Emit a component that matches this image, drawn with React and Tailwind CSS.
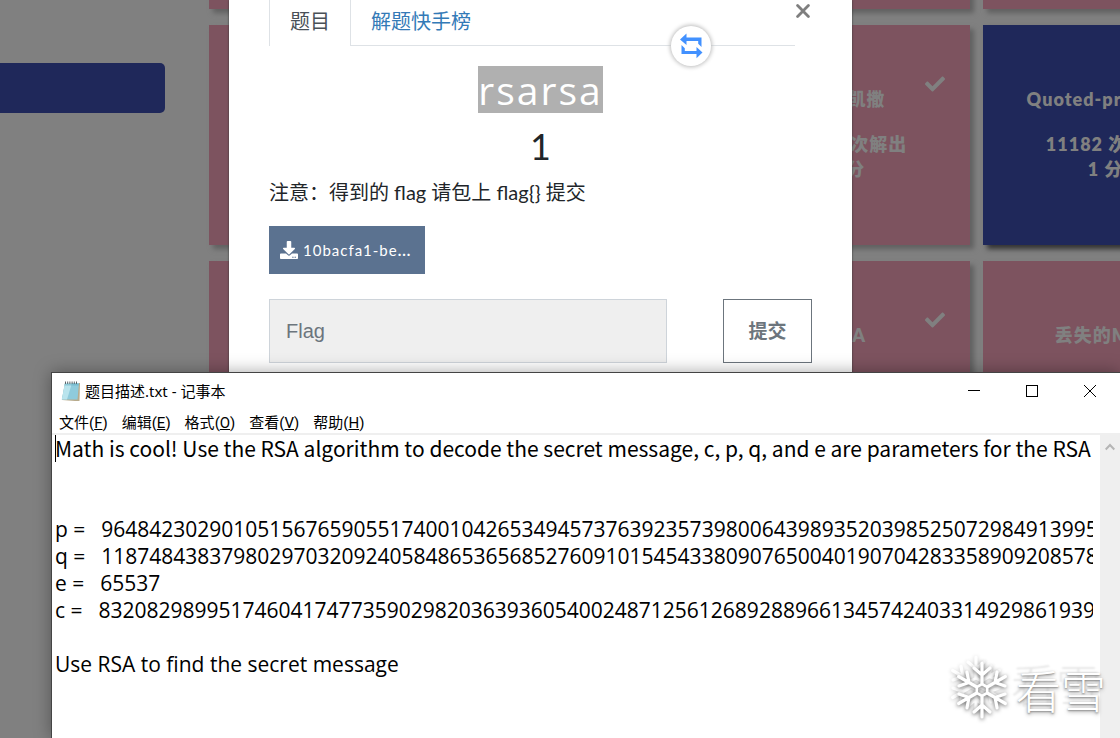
import { FaCheck, FaDownload } from "react-icons/fa";

const MESSAGE = `Math is cool! Use the RSA algorithm to decode the secret message, c, p, q, and e are parameters for the RSA


p =\u2002 9648423029010515676590551740010426534945737639235739800643989352039852507298491399561035009163427050370107570733633350911691280297777160200625281665378483
q =\u2002 11874843837980297032092405848653656852760910154543380907650040190704283358909208578251063047732443992230647903887510065547947313543299303261986053486569407
e =\u2002 65537
c =\u2002 83208298995174604174773590298203639360540024871256126892889661345742403314929861939100492666605647316646576486526217457006376842280869728581726746401583705899941768214138742259689334840735633553053887641847651173776251820293087212885670180367406807406765923638973161375817392737747832762751690104423869019034

Use RSA to find the secret message`;

const CARDS = [
  { id: "a1" }, { id: "a2" }, { id: "a3" }, { id: "a4" },
  { id: "b1" }, { id: "b2" },
  { id: "b3", title: "变异凯撒", solves: "12365 次解出", points: "1 分", solved: true },
  { id: "b4", title: "Quoted-printable", solves: "11182 次解出", points: "1 分", navy: true },
  { id: "c1" }, { id: "c2" },
  { id: "c3", title: "RSA", solved: true },
  { id: "c4", title: "丢失的MD5" },
];

function Card({ title, solves, points, solved, navy }) {
  return (
    <button
      className={
        "relative flex h-[220px] flex-col items-center pt-[62px] text-[18px] font-extrabold leading-[25px] tracking-[1px] text-[#808080] " +
        (navy
          ? "bg-[#1f285a] shadow-[4px_4px_5px_#333]"
          : "bg-[#7d535f] shadow-[4px_4px_5px_#606060]")
      }
    >
      {solved && <FaCheck className="absolute right-[25px] top-[49px] size-5" />}
      {title && <span className="whitespace-nowrap">{title}</span>}
      {solves && <span className="mt-5 whitespace-nowrap">{solves}</span>}
      {points && <span>{points}</span>}
    </button>
  );
}

function Board() {
  return (
    <div className="flex h-screen overflow-hidden">
      <aside className="w-[165px] shrink-0 pt-[63px]">
        <button aria-label="分类" className="block h-[50px] w-full rounded-r-[5px] bg-[#1f285a]" />
      </aside>
      <main className="-mt-[211px] ml-11 grid shrink-0 grid-cols-[repeat(4,245px)] content-start gap-x-[13px] gap-y-4">
        {CARDS.map((c) => (
          <Card key={c.id} {...c} />
        ))}
      </main>
    </div>
  );
}

function Challenge() {
  return (
    <section
      role="dialog"
      aria-label="rsarsa"
      className="relative mx-auto h-full max-w-[623px] bg-white px-10 text-[#212529] shadow-[0_0_2px_#333]"
    >
      <button aria-label="关闭" className="absolute right-[42px] top-1 text-[#7f7f7f]">
        <svg viewBox="0 0 14 14" className="size-[14px]" stroke="currentColor" strokeWidth="2.8" strokeLinecap="round">
          <path d="M1.6 1.6 12.4 12.4M12.4 1.6 1.6 12.4" />
        </svg>
      </button>
      <nav className="mr-[17px] flex h-[46px] text-[20px] leading-[42px]">
        <a href="#challenge" className="w-[82px] border-x border-[#dee2e6] text-center text-[#495057]">题目</a>
        <a href="#solves" className="flex-1 border-b border-[#dee2e6] pl-5 text-[#337ab7]">解题快手榜</a>
      </nav>
      <button
        aria-label="翻译"
        className="absolute left-[442px] top-[26px] flex size-10 items-center justify-center rounded-full bg-white shadow-[0_0_4px_1px_#bbb]"
      >
        <svg viewBox="0 0 24 26" className="h-[26px] w-6" fill="#4291ff">
          <path d="M1 6.5 7.5 0.5V4.5H22.5V14L19.2 10.8V8H7.5V12Z" />
          <path d="M2.5 12 5.8 15.2V18H17.5V14L23.5 19.5 17.5 25.2V21H2.5Z" />
        </svg>
      </button>
      <div className="flex flex-col items-center">
        <h2 className="mt-5 h-[47px] bg-[#b0b0b0] font-['Open_Sans',sans-serif] text-[39px] font-normal leading-[47px] tracking-[2px] text-white">rsarsa</h2>
        <h3 className="mt-3 text-[36px] leading-[42px]">1</h3>
      </div>
      <p className="mt-[10px] text-[20px] leading-[30px]">注意：得到的 flag 请包上 flag{"{}"} 提交</p>
      <button className="mt-[19px] flex h-12 w-[156px] items-center gap-[5px] bg-[#5b7290] pl-[11px] text-[15px] tracking-[1px] text-white">
        <FaDownload className="size-[18px]" />
        <span>10bacfa1-be<b>...</b></span>
      </button>
      <form className="mt-[25px] flex justify-between" onSubmit={(e) => e.preventDefault()}>
        <input
          aria-label="Flag"
          placeholder="Flag"
          className="h-16 w-[398px] border border-[#ced4da] bg-[#efefef] px-4 font-['Liberation_Sans',sans-serif] text-[20px] placeholder:text-[#6c757d]"
        />
        <button className="h-16 w-[89px] border border-[#6c757d] text-[19px] font-bold text-[#6c757d]">提交</button>
      </form>
    </section>
  );
}

function NotepadIcon() {
  return (
    <svg viewBox="0 0 20 21" className="h-[21px] w-5">
      <path d="M4 2H19L18.5 20H14L1 19Z" fill="#b8ab8c" />
      <path d="M4 2H18L16.5 18.5H0.8Z" fill="#8fcbdc" />
      <path d="M4 2H11L6 18.5H0.8Z" fill="#b9e4ed" />
      <path d="M3.7 3.5H17.8L17.7 4.2H3.5Z" fill="#5fa9bf" />
      <path d="M4.5 0.5V3M6.7 0.5V3M8.9 0.5V3M11.1 0.5V3M13.3 0.5V3M15.5 0.5V3" stroke="#5b6469" strokeWidth="1" />
    </svg>
  );
}

const MENUS = [["文件", "F"], ["编辑", "E"], ["格式", "O"], ["查看", "V"], ["帮助", "H"]];

function Notepad() {
  return (
    <section
      aria-label="记事本"
      className="absolute bottom-0 left-[51px] right-0 top-[372px] flex flex-col border-l border-t border-[#444] bg-white font-['Noto_Sans','Noto_Sans_CJK_SC',sans-serif] text-black shadow-[0_0_16px_rgba(0,0,0,0.35)]"
    >
      <header className="flex h-9 items-center pl-[9px] pr-px">
        <NotepadIcon />
        <h1 className="ml-1 flex-1 text-[15px]">题目描述.txt - 记事本</h1>
        <div className="flex">
          <button aria-label="最小化" className="flex h-9 w-[58px] items-center justify-center">
            <svg viewBox="0 0 12 12" className="size-3" stroke="#000" shapeRendering="crispEdges"><path d="M0 5.5H12" /></svg>
          </button>
          <button aria-label="最大化" className="flex h-9 w-[58px] items-center justify-center">
            <svg viewBox="0 0 12 12" className="size-3" stroke="#000" fill="none" shapeRendering="crispEdges"><path d="M.5 .5H11.5V11.5H.5Z" /></svg>
          </button>
          <button aria-label="关闭窗口" className="flex h-9 w-[58px] items-center justify-center">
            <svg viewBox="0 0 12 12" className="size-3" stroke="#000"><path d="M0 0 12 12M12 0 0 12" /></svg>
          </button>
        </div>
      </header>
      <div className="flex h-6 gap-[14px] pl-[7px] text-[15px] leading-[28px]">
        {MENUS.map(([name, key]) => (
          <button key={key} className="whitespace-nowrap font-['Roboto','Noto_Sans_CJK_SC',sans-serif]">
            {name}(<u>{key}</u>)
          </button>
        ))}
      </div>
      <div className="flex flex-1 border-t-2 border-[#efefef]">
        <div className="relative flex flex-1 pl-[3px] pr-[7px]">
          <span className="absolute left-[3px] top-0 h-[27px] w-px bg-black" />
          <textarea
            aria-label="文本"
            readOnly
            wrap="off"
            defaultValue={MESSAGE}
            className="flex-1 resize-none overflow-hidden whitespace-pre font-['Open_Sans','Noto_Sans_CJK_SC',sans-serif] text-[21px] leading-[27px] outline-none first-line:font-['Noto_Sans_CJK_SC',sans-serif]"
          />
        </div>
        <div className="w-5 bg-[#efefef]">
          <button aria-label="向上滚动" className="flex h-6 w-5 items-center justify-center">
            <svg viewBox="0 0 10 8" className="h-2 w-[10px]" fill="none" stroke="#b5b5b5" strokeWidth="2"><path d="M.7 6.5 5 2 9.3 6.5" /></svg>
          </button>
        </div>
      </div>
    </section>
  );
}

function Snowflake({ className }) {
  return (
    <svg viewBox="-30 -30 60 60" className={className} fill="none" stroke="#fff" strokeWidth="3.2" strokeLinecap="round">
      <path d="M0-6 5.2-3V3L0 6-5.2 3V-3Z" strokeWidth="2.6" />
      {[0, 60, 120, 180, 240, 300].map((a) => (
        <path key={a} transform={`rotate(${a})`} d="M0-7V-27M0-15-8-22M0-15 8-22" />
      ))}
    </svg>
  );
}

function Watermark() {
  return (
    <div className="pointer-events-none absolute bottom-[18px] right-[14px] flex items-center gap-1 font-['Noto_Sans_CJK_SC',sans-serif]">
      <div className="relative size-[60px]">
        <Snowflake className="absolute -left-[6px] -top-[6px] size-[60px] opacity-60 drop-shadow-[0_1px_2px_rgba(0,0,0,0.35)]" />
        <Snowflake className="relative size-[60px] drop-shadow-[0_1px_2px_rgba(0,0,0,0.6)]" />
      </div>
      <span className="text-[45px] font-light leading-[60px] text-white [text-shadow:0_1px_2px_#888,0_2px_4px_#aaa,-5px_-6px_2px_#e8e8e8]">看雪</span>
    </div>
  );
}

export default function App() {
  return (
    <div className="relative h-screen overflow-hidden bg-[#808080] font-['Lato','Noto_Sans_CJK_SC',sans-serif]">
      <Board />
      <div className="absolute inset-0 pr-[39px]">
        <Challenge />
      </div>
      <Notepad />
      <Watermark />
    </div>
  );
}
